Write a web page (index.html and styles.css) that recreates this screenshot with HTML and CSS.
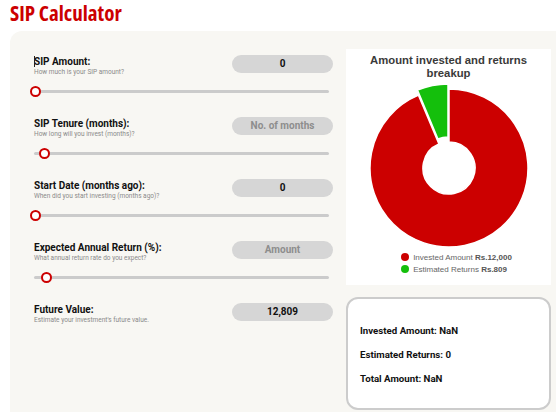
FILE: index.html
```html
<!DOCTYPE html>
<html lang="en">
<head>
<meta charset="utf-8">
<title>SIP Calculator</title>
<link rel="stylesheet" href="styles.css">
</head>
<body>
<h1 class="title">SIP Calculator</h1>
<div class="card">
  <div class="inputs">
    <div class="row">
      <div class="head">
        <div class="text">
          <div class="label"><span class="caret"></span>SIP Amount:</div>
          <div class="sub">How much is your SIP amount?</div>
        </div>
        <div class="pill">0</div>
      </div>
      <div class="slider"><div class="track"></div><div class="thumb" style="left:1px"></div></div>
    </div>
    <div class="row">
      <div class="head">
        <div class="text">
          <div class="label">SIP Tenure (months):</div>
          <div class="sub">How long will you invest (months)?</div>
        </div>
        <div class="pill placeholder">No. of months</div>
      </div>
      <div class="slider"><div class="track"></div><div class="thumb" style="left:10px"></div></div>
    </div>
    <div class="row">
      <div class="head">
        <div class="text">
          <div class="label">Start Date (months ago):</div>
          <div class="sub">When did you start investing (months ago)?</div>
        </div>
        <div class="pill">0</div>
      </div>
      <div class="slider"><div class="track"></div><div class="thumb" style="left:1px"></div></div>
    </div>
    <div class="row">
      <div class="head">
        <div class="text">
          <div class="label">Expected Annual Return (%):</div>
          <div class="sub">What annual return rate do you expect?</div>
        </div>
        <div class="pill placeholder">Amount</div>
      </div>
      <div class="slider"><div class="track"></div><div class="thumb" style="left:12px"></div></div>
    </div>
    <div class="row">
      <div class="head">
        <div class="text">
          <div class="label">Future Value:</div>
          <div class="sub">Estimate your investment's future value.</div>
        </div>
        <div class="pill">12,809</div>
      </div>
    </div>
  </div>
  <div class="side">
    <div class="chart">
      <div class="chart-title">Amount invested and returns breakup</div>
      <svg class="donut" width="204" height="170" viewBox="0 0 204 170">
        <path d="M102 8 A79 79 0 1 1 71.46 14.14 L91.95 63.01 A26 26 0 1 0 102 61 Z" fill="#cc0000" stroke="#ffffff" stroke-width="1.5"/>
        <path d="M71.46 14.14 A79 79 0 0 1 102 8 L102 61 A26 26 0 0 0 91.95 63.01 Z" fill="#14bf0c" stroke="#ffffff" stroke-width="1.5" transform="translate(-1 -5)"/>
      </svg>
      <div class="legend">
        <div class="item"><span class="dot red"></span><span>Invested Amount <b>Rs.12,000</b></span></div>
        <div class="item"><span class="dot green"></span><span>Estimated Returns <b>Rs.809</b></span></div>
      </div>
    </div>
    <div class="results">
      <div class="res">Invested Amount: NaN</div>
      <div class="res">Estimated Returns: 0</div>
      <div class="res">Total Amount: NaN</div>
    </div>
  </div>
</div>
</body>
</html>
```

FILE: styles.css
```css
html, body {
  margin: 0;
  padding: 0;
  background: #ffffff;
  overflow: hidden;
  width: 556px;
  height: 412px;
}

.title {
  margin: 0;
  padding: 0 0 0 10px;
  font-family: "Open Sans", "Noto Sans", sans-serif;
  font-weight: 700;
  font-stretch: 87%;
  font-size: 21px;
  line-height: 26px;
  color: #cc0000;
  height: 31px;
  box-sizing: border-box;
}

.card {
  margin-left: 10px;
  width: 580px;
  height: 400px;
  box-sizing: border-box;
  background: #f8f7f3;
  border-radius: 12px;
  padding: 18px 0 0 24px;
  display: grid;
  grid-template-columns: 299px 205px;
  column-gap: 13px;
  align-items: start;
}

.inputs {
  padding-top: 6px;
  display: flex;
  flex-direction: column;
  gap: 20px;
}

.row {
  display: flex;
  flex-direction: column;
  gap: 12px;
}

.head {
  display: flex;
  justify-content: space-between;
  align-items: flex-start;
  height: 18px;
}

.text {
  font-family: Roboto, "Liberation Sans", sans-serif;
  padding-top: 1px;
}

.label {
  font-size: 10px;
  font-weight: 700;
  line-height: 11px;
  color: #111;
  position: relative;
}

.caret {
  position: absolute;
  left: 0;
  top: 0;
  width: 1px;
  height: 11px;
  background: #222;
}

.sub {
  font-size: 6.5px;
  line-height: 9px;
  color: #8a8a8a;
  margin-top: 1px;
}

.pill {
  width: 101px;
  height: 18px;
  border-radius: 9px;
  background: #d6d6d6;
  font-family: Roboto, "Liberation Sans", sans-serif;
  font-weight: 700;
  font-size: 10px;
  line-height: 18px;
  text-align: center;
  color: #111;
}

.pill.placeholder {
  color: #8d8d8d;
}

.slider {
  position: relative;
  height: 12px;
  width: 295px;
}

.track {
  margin-top: 5px;
  height: 3px;
  border-radius: 2px;
  background: #cbcbcb;
}

.thumb {
  position: absolute;
  top: 1px;
  width: 7px;
  height: 7px;
  margin-left: -5px;
  border: 2px solid #cc0000;
  border-radius: 50%;
  background: #ffffff;
}

.side {
  display: flex;
  flex-direction: column;
  gap: 12px;
}

.chart {
  background: #ffffff;
  height: 236px;
  display: flex;
  flex-direction: column;
  align-items: center;
}

.chart-title {
  margin-top: 5px;
  width: 180px;
  text-align: center;
  font-family: "Liberation Sans", Arial, sans-serif;
  font-weight: 700;
  font-size: 11.3px;
  line-height: 13px;
  color: #3a3a3a;
}

.donut {
  display: block;
  margin-top: 1px;
}

.legend {
  font-family: "Liberation Sans", Arial, sans-serif;
  font-size: 8px;
  color: #666;
  display: flex;
  flex-direction: column;
  align-items: flex-start;
  padding-left: 16px;
}

.legend b {
  color: #555;
}

.item {
  display: flex;
  align-items: center;
  gap: 4px;
  height: 12px;
  white-space: pre;
}

.dot {
  width: 8px;
  height: 8px;
  border-radius: 50%;
}

.dot.red { background: #cc0000; }
.dot.green { background: #14bf0c; }

.results {
  height: 113px;
  box-sizing: border-box;
  border: 2px solid #cccccc;
  border-radius: 12px;
  background: #ffffff;
  padding: 26px 0 0 12px;
  display: flex;
  flex-direction: column;
  gap: 12px;
  font-family: Roboto, "Liberation Sans", sans-serif;
  font-weight: 700;
  font-size: 9.7px;
  line-height: 12px;
  color: #111;
}
```
